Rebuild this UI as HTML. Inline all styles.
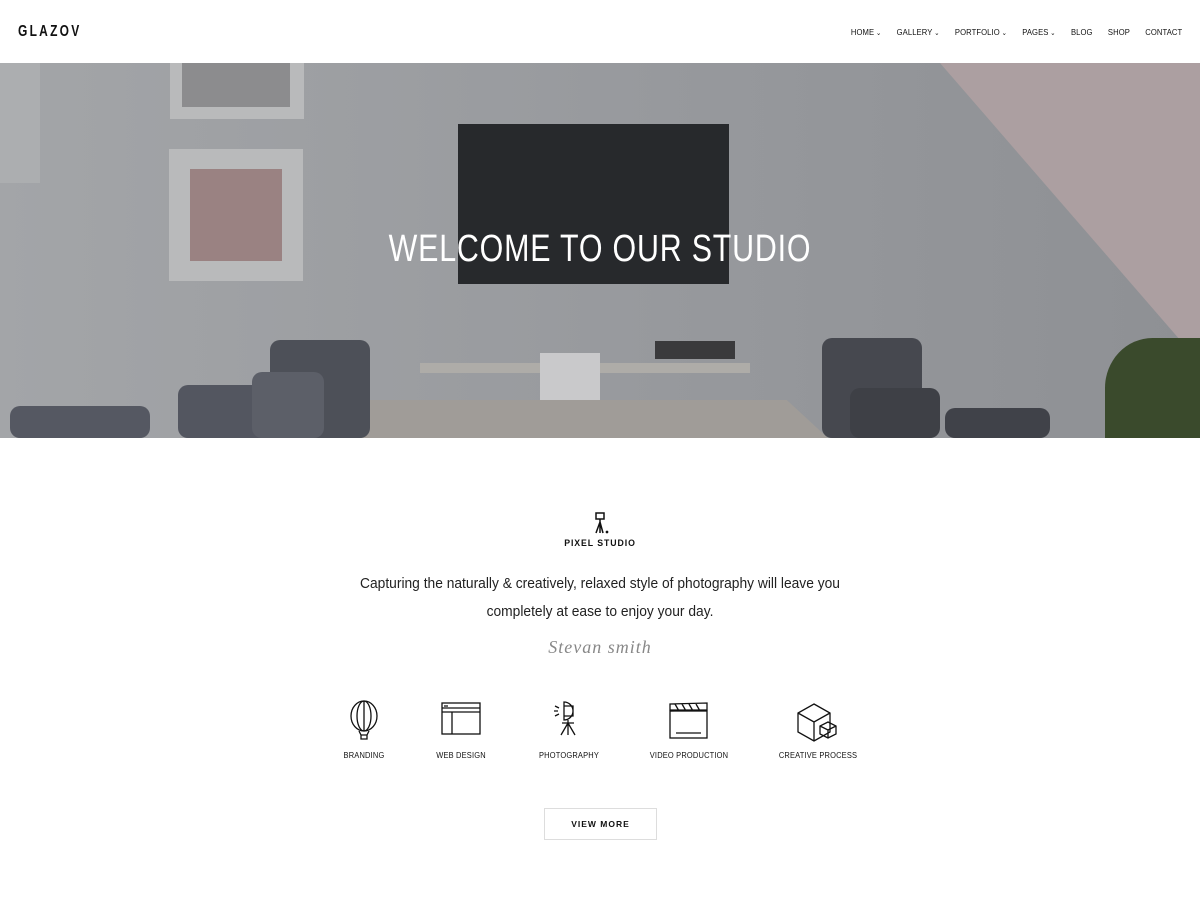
<!DOCTYPE html>
<html><head><meta charset="utf-8"><style>
*{margin:0;padding:0;box-sizing:border-box}
body{width:1200px;height:900px;background:#fff;font-family:"Liberation Sans",sans-serif;color:#111;overflow:hidden;position:relative}
.hdr{position:absolute;left:0;top:0;width:1200px;height:63px;background:#fff}
.logo{position:absolute;left:18px;top:23px;font-size:16px;font-weight:bold;letter-spacing:3px;transform:scaleX(.75);transform-origin:left}
.nav{position:absolute;right:18px;top:27px;font-size:8.5px;display:flex;gap:17px;letter-spacing:.1px;transform:scaleX(.9);transform-origin:right}
.nav span i{font-style:normal;font-size:7px;margin-left:2px}
.hero{position:absolute;left:0;top:63px;width:1200px;height:375px;overflow:hidden;background:#8f9196}
.hero div{position:absolute}
.abs{position:absolute}
h1{position:absolute;left:0;width:1200px;text-align:center;color:#fff;font-weight:normal;font-size:38px;letter-spacing:1px;transform:scaleX(.8)}
.txt{position:absolute;left:0;width:1200px;text-align:center}
.ic{position:absolute;top:700px;text-align:center;font-size:8.5px;letter-spacing:.2px;white-space:nowrap;transform:scaleX(.88)}
.btn{position:absolute;left:544px;top:808px;width:113px;height:32px;border:1px solid #ddd;text-align:center;line-height:31px;font-size:8.5px;font-weight:bold;letter-spacing:1px}
</style></head><body>
<div class="hdr"><div class="logo">GLAZOV</div>
<div class="nav"><span>HOME<i>⌄</i></span><span>GALLERY<i>⌄</i></span><span>PORTFOLIO<i>⌄</i></span><span>PAGES<i>⌄</i></span><span>BLOG</span><span>SHOP</span><span>CONTACT</span></div></div>
<div class="hero">
<div style="left:0;top:0;width:1200px;height:375px;background:linear-gradient(90deg,#a3a5a8,#96989c 60%,#8e9094)"></div>
<div style="left:940px;top:0;width:260px;height:300px;background:#ac9fa1;clip-path:polygon(0 0,100% 0,100% 100%)"></div>
<div style="left:0;top:0;width:40px;height:120px;background:#acaeb0"></div>
<div style="left:170px;top:0;width:134px;height:56px;background:#b9babb"></div>
<div style="left:182px;top:0;width:108px;height:44px;background:#8c8c8e"></div>
<div style="left:169px;top:86px;width:134px;height:132px;background:#b9babb"></div>
<div style="left:190px;top:106px;width:92px;height:92px;background:#9a8282"></div>
<div style="left:458px;top:61px;width:271px;height:160px;background:#27292c"></div>
<div style="left:420px;top:300px;width:330px;height:10px;background:#aeaca8"></div>
<div style="left:655px;top:278px;width:80px;height:18px;background:#3a3a3c"></div>
<div style="left:540px;top:290px;width:60px;height:85px;background:#c9c9cb"></div>
<div style="left:290px;top:337px;width:540px;height:40px;background:#a09c98;clip-path:polygon(8% 0,92% 0,100% 100%,0 100%)"></div>
<div style="left:270px;top:277px;width:100px;height:98px;background:#4d5058;border-radius:10px"></div>
<div style="left:178px;top:322px;width:98px;height:53px;background:#535660;border-radius:10px"></div>
<div style="left:252px;top:309px;width:72px;height:66px;background:#5c5f68;border-radius:10px"></div>
<div style="left:10px;top:343px;width:140px;height:32px;background:#555862;border-radius:10px"></div>
<div style="left:822px;top:275px;width:100px;height:100px;background:#46484f;border-radius:10px"></div>
<div style="left:850px;top:325px;width:90px;height:50px;background:#3e4046;border-radius:10px"></div>
<div style="left:945px;top:345px;width:105px;height:30px;background:#404249;border-radius:10px"></div>
<div style="left:1105px;top:275px;width:95px;height:100px;background:#3a4a2c;border-radius:50% 0 0 0"></div>
<h1 style="top:165px">WELCOME TO OUR STUDIO</h1>
</div>
<svg class="abs" style="left:593px;top:512px" width="16" height="22" viewBox="0 0 16 22" fill="none" stroke="#111" stroke-width="1.5"><rect x="3" y="1" width="8" height="6"/><path d="M7 7v3M7 10l-4 11M7 10l3 11M7 10v11"/><circle cx="14" cy="20" r=".6" fill="#111"/></svg>
<div class="txt" style="top:538px;font-size:9.5px;font-weight:bold;letter-spacing:1px;transform:scaleX(.92)">PIXEL STUDIO</div>
<div class="txt" style="top:570px;font-size:15px;line-height:28px;color:#222;transform:scaleX(.92)">Capturing the naturally &amp; creatively, relaxed style of photography will leave you<br>completely at ease to enjoy your day.</div>
<div class="txt" style="top:637px;font-size:18px;color:#888;font-family:'Liberation Serif',serif;font-style:italic;letter-spacing:1px">Stevan smith</div>
<svg class="abs" style="left:330px;top:698px" width="540" height="46" fill="none" stroke="#111" stroke-width="1.3">
<g transform="translate(20,2)"><ellipse cx="14" cy="16" rx="13" ry="15"/><ellipse cx="14" cy="16" rx="7" ry="15"/><path d="M14 1v30M9 31l2 4h6l2-4M11 35h6v4h-6z"/></g>
<g transform="translate(112,5)"><rect x="0" y="0" width="38" height="31"/><path d="M0 5h38M0 9h38M10 9v22M2 3h4"/></g>
<g transform="translate(222,2)"><path d="M12 2a9 9 0 0 1 0 18zM12 6h9v10h-9M16 20v3M10 23h12M16 23l-7 12M16 23l7 12M16 23v12M3 6l4 2M2 11h4M3 16l4-2"/></g>
<g transform="translate(340,5)"><rect x="0" y="8" width="37" height="27"/><path d="M0 1l37-1v7H0zM0 8l37-1M6 30h25M5 1l4 7M12 1l4 7M19 1l4 7M26 1l4 7"/></g>
<g transform="translate(468,4)"><path d="M16 2l16 9v19l-16 9-16-9V11zM0 11l16 9 16-9M16 20v19"/><path d="M30 20l8 4v8l-8 4-8-4v-8zM22 24l8 4 8-4M30 28v8"/></g>
</svg>
<div class="ic" style="left:324px;top:750px;width:80px">BRANDING</div>
<div class="ic" style="left:421px;top:750px;width:80px">WEB DESIGN</div>
<div class="ic" style="left:519px;top:750px;width:100px">PHOTOGRAPHY</div>
<div class="ic" style="left:629px;top:750px;width:120px">VIDEO PRODUCTION</div>
<div class="ic" style="left:758px;top:750px;width:120px">CREATIVE PROCESS</div>
<div class="btn">VIEW MORE</div>
</body></html>
